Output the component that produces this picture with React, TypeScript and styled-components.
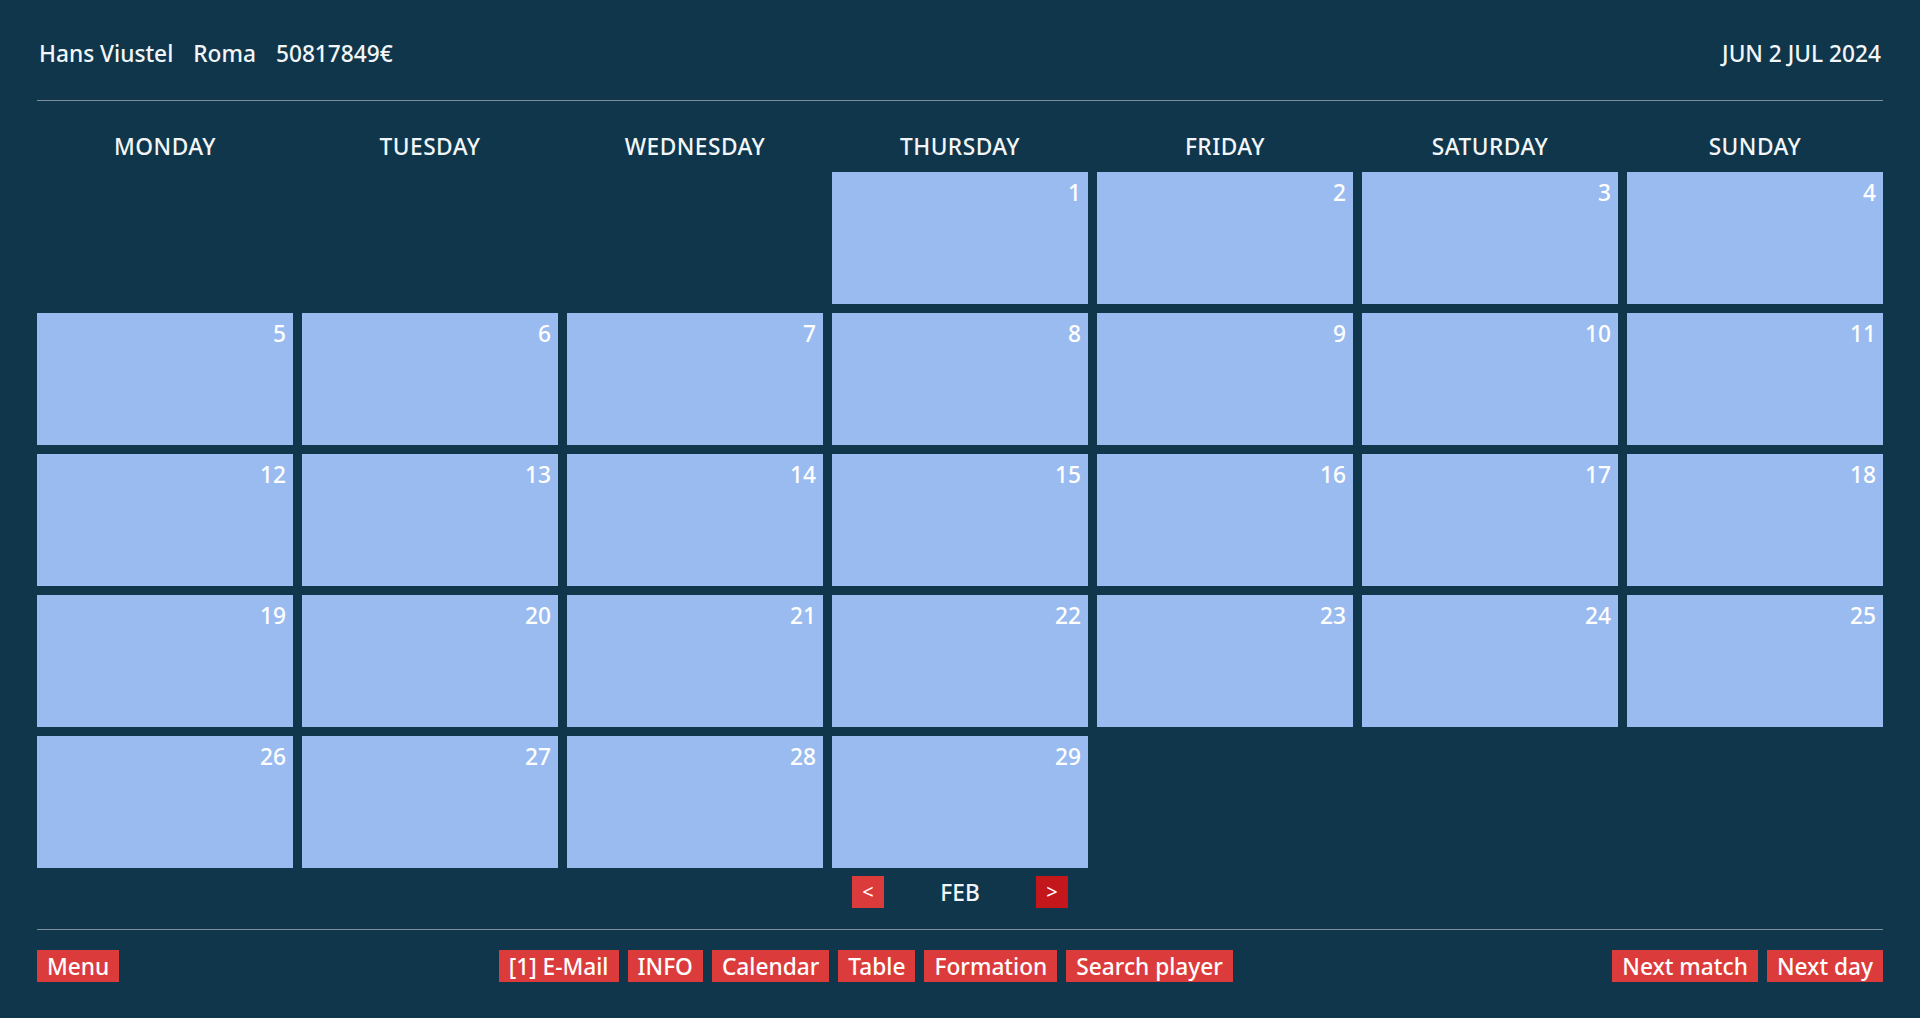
import React from "react";
import styled, { createGlobalStyle } from "styled-components";

const GlobalStyle = createGlobalStyle`
  html, body {
    margin: 0;
    padding: 0;
    background: #10364b;
  }
  body {
    font-family: "Noto Sans", "Open Sans", sans-serif;
    color: #f3f6f9;
  }
`;

const Page = styled.div`
  box-sizing: border-box;
  width: 1920px;
  height: 1018px;
  padding: 37px 37px 0;
  background: #10364b;
  display: flex;
  flex-direction: column;
`;

const Header = styled.header`
  display: flex;
  justify-content: space-between;
  align-items: center;
  height: 33px;
  padding-bottom: 30px;
  border-bottom: 1px solid #7f8e9b;
  font-size: 22.7px;
  font-weight: 500;
`;

const HeaderLeft = styled.div`
  display: flex;
  gap: 20px;
  padding-left: 2px;
`;

const HeaderRight = styled.div`
  padding-right: 2px;
`;

const Grid = styled.div`
  display: grid;
  grid-template-columns: repeat(7, 256px);
  column-gap: 9px;
  row-gap: 9px;
`;

const DayHeads = styled(Grid)`
  margin-top: 31px;
  margin-bottom: 10px;
`;

const DayHead = styled.div`
  text-align: center;
  font-size: 22.7px;
  font-weight: 500;
  line-height: 30px;
  letter-spacing: 0.5px;
`;

const Cell = styled.div<{ $empty?: boolean }>`
  height: 132px;
  box-sizing: border-box;
  padding: 6px 7px 0 0;
  background: ${(p) => (p.$empty ? "transparent" : "#9abbf0")};
  text-align: right;
  font-size: 22.7px;
  font-weight: 500;
  line-height: 30px;
  color: #ffffff;
`;

const NavRow = styled(Grid)`
  margin-top: 8px;
`;

const Nav = styled.div`
  grid-column: 4;
  display: flex;
  justify-content: space-between;
  align-items: center;
  height: 32px;
  padding: 0 20px;
`;

const ArrowBtn = styled.button<{ $dark?: boolean }>`
  box-sizing: border-box;
  width: 32px;
  height: 32px;
  border: none;
  padding: 0;
  background: ${(p) => (p.$dark ? "#c3171c" : "#dc3b3c")};
  color: #fff;
  font-family: "Noto Sans", "Open Sans", sans-serif;
  font-size: 20px;
  line-height: 32px;
  cursor: pointer;
`;

const Month = styled.div`
  box-sizing: border-box;
  height: 32px;
  font-size: 22.7px;
  font-weight: 500;
  line-height: 31px;
  padding-top: 1px;
`;

const Footer = styled.footer`
  margin-top: 21px;
  border-top: 1px solid #7f8e9b;
  padding-top: 20px;
  display: flex;
  justify-content: space-between;
  align-items: center;
`;

const Btn = styled.button`
  box-sizing: border-box;
  height: 32px;
  border: none;
  padding: 1px 10px 0;
  background: #dc3b3c;
  color: #fff;
  font-family: "Noto Sans", "Open Sans", sans-serif;
  font-size: 22.7px;
  font-weight: 500;
  line-height: 31px;
  white-space: nowrap;
  cursor: pointer;
`;

const Group = styled.div`
  display: flex;
  gap: 9px;
`;

const days = ["MONDAY", "TUESDAY", "WEDNESDAY", "THURSDAY", "FRIDAY", "SATURDAY", "SUNDAY"];

export default function App() {
  const cells: (number | null)[] = [];
  for (let i = 0; i < 3; i++) cells.push(null);
  for (let d = 1; d <= 29; d++) cells.push(d);
  while (cells.length < 35) cells.push(null);

  return (
    <>
      <GlobalStyle />
      <Page>
        <Header>
          <HeaderLeft>
            <span>Hans Viustel</span>
            <span>Roma</span>
            <span>50817849€</span>
          </HeaderLeft>
          <HeaderRight>JUN 2 JUL 2024</HeaderRight>
        </Header>
        <DayHeads>
          {days.map((d) => (
            <DayHead key={d}>{d}</DayHead>
          ))}
        </DayHeads>
        <Grid>
          {cells.map((c, i) => (
            <Cell key={i} $empty={c === null}>
              {c ?? ""}
            </Cell>
          ))}
        </Grid>
        <NavRow>
          <Nav>
            <ArrowBtn>&lt;</ArrowBtn>
            <Month>FEB</Month>
            <ArrowBtn $dark>&gt;</ArrowBtn>
          </Nav>
        </NavRow>
        <Footer>
          <Group>
            <Btn>Menu</Btn>
          </Group>
          <Group>
            <Btn>[1] E-Mail</Btn>
            <Btn>INFO</Btn>
            <Btn>Calendar</Btn>
            <Btn>Table</Btn>
            <Btn>Formation</Btn>
            <Btn>Search player</Btn>
          </Group>
          <Group>
            <Btn>Next match</Btn>
            <Btn>Next day</Btn>
          </Group>
        </Footer>
      </Page>
    </>
  );
}
